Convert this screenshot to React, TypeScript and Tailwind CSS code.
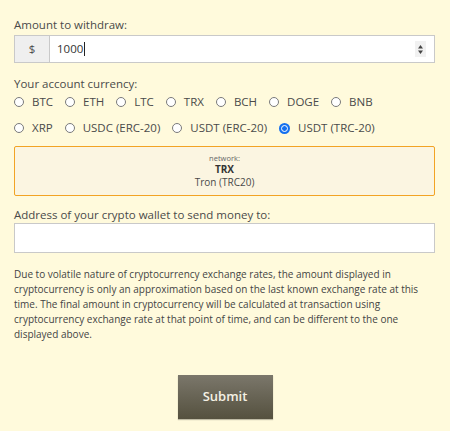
const rowOne = ["BTC", "ETH", "LTC", "TRX", "BCH", "DOGE", "BNB"]
const rowTwo = ["XRP", "USDC (ERC-20)", "USDT (ERC-20)", "USDT (TRC-20)"]

function Radio({ label, checked }: { label: string; checked?: boolean }) {
  return (
    <label className="flex items-center gap-[8px]">
      {checked ? (
        <span className="flex h-[11px] w-[11px] items-center justify-center rounded-full bg-[#1570ef]">
          <span className="h-[7px] w-[7px] rounded-full border-[1.5px] border-white bg-[#1570ef]" />
        </span>
      ) : (
        <span className="h-[10px] w-[10px] rounded-full border border-[#7a7a7a] bg-white" />
      )}
      <span>{label}</span>
    </label>
  )
}

export default function App() {
  return (
    <div className="h-[431px] w-[450px] bg-[#fffadc] px-[14px] pt-[15px] font-['Open_Sans',sans-serif] text-[#4a4a4a]">
      <p className="text-[11.5px] leading-[19px]">Amount to withdraw:</p>
      <div className="mt-[1px] flex h-[28px] w-[421px] border border-[#c9c9c9] bg-white">
        <span className="flex w-[35px] items-center justify-center border-r border-[#c9c9c9] bg-[#efefef] text-[11.5px]">
          $
        </span>
        <div className="flex flex-1 items-center pl-[7px] pr-[8px] text-[11.5px] text-[#333]">
          <span>1000</span>
          <span className="ml-[1px] h-[14px] w-[1px] bg-[#222]" />
          <span className="ml-auto flex h-[16px] w-[11px] items-center justify-center bg-[#f1f1f1]">
            <svg width="7" height="11" viewBox="0 0 7 11">
              <path d="M3.5 1 L6 4.5 L1 4.5 Z" fill="#444" />
              <path d="M3.5 10 L6 6.5 L1 6.5 Z" fill="#444" />
            </svg>
          </span>
        </div>
      </div>

      <p className="mt-[12px] text-[11.5px] leading-[18px]">Your account currency:</p>
      <div className="flex flex-col gap-[8px] text-[11.5px] leading-[18px]">
        <div className="flex gap-x-[12px]">
          {rowOne.map((c) => (
            <Radio key={c} label={c} />
          ))}
        </div>
        <div className="flex gap-x-[12px]">
          {rowTwo.map((c) => (
            <Radio key={c} label={c} checked={c === "USDT (TRC-20)"} />
          ))}
        </div>
      </div>

      <div className="mt-[9px] flex h-[50px] w-[421px] flex-col items-center rounded-[2px] border-[1.5px] border-[#f2a324] bg-[#fbf5e1] pt-[6px] text-center">
        <span className="text-[7.5px] leading-[10px] text-[#666]">network:</span>
        <span className="text-[10px] font-bold leading-[13px] text-[#333]">TRX</span>
        <span className="text-[10px] leading-[12px]">Tron (TRC20)</span>
      </div>

      <p className="mt-[11px] text-[11.5px] leading-[16px]">Address of your crypto wallet to send money to:</p>
      <div className="h-[30px] w-[421px] border border-[#c9c9c9] bg-white" />

      <p className="mt-[14px] text-[10px] leading-[15px] text-[#444]">
        Due to volatile nature of cryptocurrency exchange rates, the amount displayed in cryptocurrency is only an
        approximation based on the last known exchange rate at this time. The final amount in cryptocurrency will be
        calculated at transaction using cryptocurrency exchange rate at that point of time, and can be different to
        the one displayed above.
      </p>

      <div className="mt-[33px] flex justify-center">
        <button
          type="button"
          className="h-[44px] w-[95px] bg-gradient-to-b from-[#7b776b] to-[#55513f] text-[13px] font-semibold text-[#f5f1e4] shadow-[0_1px_1px_rgba(0,0,0,0.25)]"
        >
          Submit
        </button>
      </div>
    </div>
  )
}
